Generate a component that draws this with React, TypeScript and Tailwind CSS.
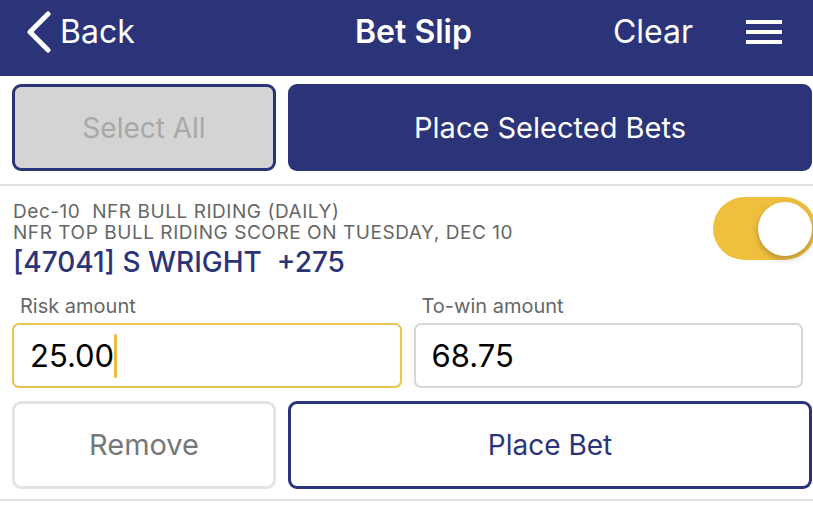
import React from "react";

export default function App() {
  return (
    <div
      className="w-[813px] h-[505px] overflow-hidden bg-white flex flex-col"
      style={{ fontFamily: "Inter, 'Liberation Sans', sans-serif" }}
    >
      {/* Header */}
      <div className="h-[76px] shrink-0 bg-[#2b3478] flex items-center pb-[12px] text-white">
        <div className="w-[355px] shrink-0 flex items-center pl-[26px]">
          <svg width="26" height="42" viewBox="0 0 26 42" className="mr-[8px]">
            <path d="M22 3 L4 21 L22 39" fill="none" stroke="white" strokeWidth="5" strokeLinecap="round" strokeLinejoin="round" />
          </svg>
          <span className="text-[32px] leading-none">Back</span>
        </div>
        <span className="text-[32px] font-semibold leading-none">Bet Slip</span>
        <span className="ml-auto text-[32px] leading-none">Clear</span>
        <div className="ml-[53px] mr-[31px] flex flex-col gap-[6px]">
          <div className="w-[36px] h-[4px] bg-white" />
          <div className="w-[36px] h-[4px] bg-white" />
          <div className="w-[36px] h-[4px] bg-white" />
        </div>
      </div>

      {/* Top action buttons */}
      <div className="pt-[8px] pl-[12px] pr-[1px] grid grid-cols-[264px_1fr] gap-[12px]">
        <div className="h-[87px] rounded-[9px] border-[3px] border-[#2b3478] bg-[#d4d4d4] flex items-center justify-center text-[28px] text-[#a8a8a8]">
          Select All
        </div>
        <div className="h-[87px] rounded-[9px] bg-[#2b3478] flex items-center justify-center text-[29px] text-white">
          Place Selected Bets
        </div>
      </div>
      <div className="mt-[13px] h-[2px] bg-[#e3e3e3]" />

      {/* Bet card */}
      <div className="flex items-start justify-between">
        <div className="pl-[13px] pt-[15px]">
          <div className="text-[19px] leading-[21px] tracking-[0.55px] text-[#666666] whitespace-pre">{"Dec-10  NFR BULL RIDING (DAILY)"}</div>
          <div className="text-[19px] leading-[21px] tracking-[0.55px] text-[#666666]">NFR TOP BULL RIDING SCORE ON TUESDAY, DEC 10</div>
          <div className="mt-[4px] text-[28px] leading-[30px] font-medium text-[#2b3478] whitespace-pre">{"[47041] S WRIGHT  +275"}</div>
        </div>
        <div className="mt-[11px] mr-[-3px] w-[103px] h-[63px] rounded-full bg-[#efbf3e] flex items-center justify-end pr-[4px]">
          <div className="w-[54px] h-[54px] rounded-full bg-white shadow-[0_3px_6px_rgba(0,0,0,0.25)]" />
        </div>
      </div>

      {/* Labels */}
      <div className="mt-[19px] px-[12px] grid grid-cols-2 gap-[12px] text-[20px] leading-[20px] text-[#666666]">
        <div className="pl-[8px]">Risk amount</div>
        <div className="pl-[9px]">To-win amount</div>
      </div>

      {/* Inputs */}
      <div className="mt-[7px] pl-[12px] pr-[10px] grid grid-cols-2 gap-[12px]">
        <div className="h-[65px] rounded-[7px] border-2 border-[#e9c54f] flex items-center pl-[16px]">
          <span className="text-[31px] text-black leading-none">25.00</span>
          <span className="w-[3px] h-[44px] bg-[#e9bd3a] rounded-full" />
        </div>
        <div className="h-[65px] rounded-[7px] border-2 border-[#d6d6d6] flex items-center pl-[16px]">
          <span className="text-[31px] text-black leading-none">68.75</span>
        </div>
      </div>

      {/* Bottom buttons */}
      <div className="mt-[13px] pl-[12px] pr-[1px] grid grid-cols-[264px_1fr] gap-[12px]">
        <div className="h-[88px] rounded-[9px] border-[3px] border-[#e3e3e3] bg-white flex items-center justify-center text-[29px] text-[#777777]">
          Remove
        </div>
        <div className="h-[88px] rounded-[9px] border-[3px] border-[#2b3478] bg-white flex items-center justify-center text-[28px] text-[#2b3478]">
          Place Bet
        </div>
      </div>
      <div className="mt-[10px] h-[2px] bg-[#e3e3e3]" />
    </div>
  );
}
